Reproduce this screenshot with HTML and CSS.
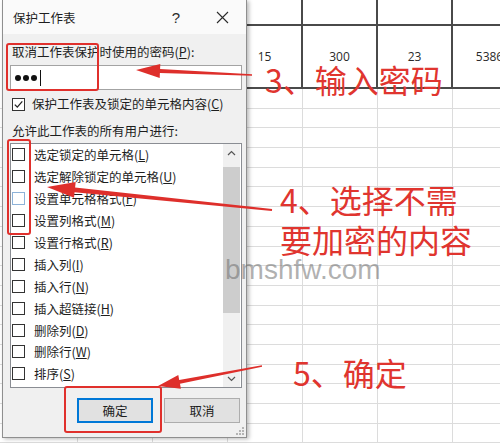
FILE: index.html
```html
<!DOCTYPE html>
<html lang="zh-CN">
<head>
<meta charset="utf-8">
<title>保护工作表</title>
<link rel="stylesheet" href="styles.css">
</head>
<body>
  <!-- worksheet behind the dialog -->
  <div class="sheet">
    <div class="row row-head">
      <div class="cell"></div><div class="cell"></div><div class="cell"></div><div class="cell"></div><div class="cell"></div><div class="cell"></div><div class="cell"></div>
    </div>
    <div class="row row-data">
      <div class="cell"></div><div class="cell"></div><div class="cell"></div><div class="cell">15</div><div class="cell">300</div><div class="cell">23</div><div class="cell">5386</div>
    </div>
    <div class="row-blank"></div><div class="row-blank"></div><div class="row-blank"></div>
    <div class="row-blank"></div><div class="row-blank"></div><div class="row-blank"></div>
    <div class="row-blank"></div><div class="row-blank"></div><div class="row-blank"></div>
    <div class="row-blank"></div><div class="row-blank"></div><div class="row-blank"></div>
    <div class="row-blank"></div><div class="row-blank"></div><div class="row-blank"></div>
    <div class="row-blank"></div><div class="row-blank"></div><div class="row-blank"></div>
  </div>

  <!-- protect sheet dialog -->
  <div class="dialog">
    <div class="titlebar">
      <span class="title">保护工作表</span>
      <span class="help">?</span>
      <span class="close">
        <svg width="13" height="13" viewBox="0 0 13 13"><path d="M1 1L12 12M12 1L1 12" stroke="#2b2b2b" stroke-width="1.1" fill="none"/></svg>
      </span>
    </div>
    <div class="dialog-body">
      <div class="field-label">取消工作表保护时使用的密码(<u>P</u>):</div>
      <div class="password"><i class="dot"></i><i class="dot"></i><i class="dot"></i><i class="caret"></i></div>
      <div class="check-row">
        <span class="box"><svg width="11" height="11" viewBox="0 0 11 11"><path d="M1.8 5.6L4.3 8.1L9.3 2.4" stroke="#222" stroke-width="1.3" fill="none"/></svg></span>
        保护工作表及锁定的单元格内容(<u>C</u>)
      </div>
      <div class="field-label allow">允许此工作表的所有用户进行:</div>
      <div class="listbox">
        <ul class="options">
          <li><span class="box"></span>选定锁定的单元格(<u>L</u>)</li>
          <li><span class="box"></span>选定解除锁定的单元格(<u>U</u>)</li>
          <li><span class="box hover"></span>设置单元格格式(<u>F</u>)</li>
          <li><span class="box"></span>设置列格式(<u>M</u>)</li>
          <li><span class="box"></span>设置行格式(<u>R</u>)</li>
          <li><span class="box"></span>插入列(<u>I</u>)</li>
          <li><span class="box"></span>插入行(<u>N</u>)</li>
          <li><span class="box"></span>插入超链接(<u>H</u>)</li>
          <li><span class="box"></span>删除列(<u>D</u>)</li>
          <li><span class="box"></span>删除行(<u>W</u>)</li>
          <li><span class="box"></span>排序(<u>S</u>)</li>
        </ul>
        <div class="scrollbar">
          <span class="arrow"><svg width="9" height="6" viewBox="0 0 9 6"><path d="M1 5L4.5 1.5L8 5" stroke="#555" stroke-width="1.2" fill="none"/></svg></span>
          <span class="thumb"></span>
          <span class="arrow arrow-down"><svg width="9" height="6" viewBox="0 0 9 6"><path d="M1 1L4.5 4.5L8 1" stroke="#555" stroke-width="1.2" fill="none"/></svg></span>
        </div>
      </div>
      <div class="buttons">
        <button class="btn primary">确定</button>
        <button class="btn">取消</button>
      </div>
    </div>
    <svg class="grip" width="8" height="8" viewBox="0 0 8 8">
      <rect x="6" y="0" width="2" height="2" fill="#b4b4b4"/>
      <rect x="3" y="3" width="2" height="2" fill="#b4b4b4"/>
      <rect x="6" y="3" width="2" height="2" fill="#b4b4b4"/>
      <rect x="0" y="6" width="2" height="2" fill="#b4b4b4"/>
      <rect x="3" y="6" width="2" height="2" fill="#b4b4b4"/>
      <rect x="6" y="6" width="2" height="2" fill="#b4b4b4"/>
    </svg>
  </div>

  <div class="watermark">bmshfw.com</div>

  <!-- red step annotations -->
  <div class="marks">
    <svg class="arrows" width="500" height="444" viewBox="0 0 500 444">
      <polygon points="252,74.2 160.1,69 160.3,64 136,70 159.7,78 159.9,73 252,75.8"/>
      <polygon points="272.1,209 75.1,187.4 75.7,181.9 47,187 74,197.8 74.6,192.3 271.9,211"/>
      <polygon points="261.9,365.3 179.2,379.9 178.3,375 158,386 180.9,388.7 180,383.8 262.1,366.7"/>
    </svg>
    <div class="frame frame-password"></div>
    <div class="frame frame-checks"></div>
    <div class="frame frame-ok"></div>
    <div class="note note-3">3、输入密码</div>
    <div class="note note-4">4、选择不需<br>要加密的内容</div>
    <div class="note note-5">5、确定</div>
  </div>
</body>
</html>
```

FILE: styles.css
```css
* {
  box-sizing: border-box;
}

body {
  margin: 0;
  width: 500px;
  height: 444px;
  overflow: hidden;
  position: relative;
  background: #fff;
  font-family: "Noto Sans CJK SC", sans-serif;
}

/* ---------- worksheet ---------- */
.sheet {
  display: flex;
  flex-direction: column;
}

.row {
  display: grid;
  grid-template-columns: repeat(7, 75px);
  padding-left: 3px;
}

.row-head {
  height: 26px;
}

.row-data {
  height: 63px;
}

.row .cell {
  border-right: 2px solid #4a4a4a;
  border-bottom: 2px solid #4a4a4a;
  display: flex;
  align-items: center;
  justify-content: center;
  font: 12px "Open Sans", sans-serif;
  color: #2a2a2a;
  white-space: nowrap;
  overflow: hidden;
}

.row-blank {
  flex: none;
  height: 19.7px;
  border-bottom: 1px solid #dcdcdc;
  background-image: repeating-linear-gradient(90deg, transparent 0 74px, #dcdcdc 74px 75px);
  background-position: 3px 0;
}

/* ---------- dialog ---------- */
.dialog {
  position: absolute;
  left: 2px;
  top: 0;
  width: 245px;
  height: 438px;
  background: #f0f0f0;
  border: 1px solid #8f8f8f;
  border-top: 0;
  box-shadow: 2px 1px 4px rgba(0, 0, 0, 0.28);
  display: flex;
  flex-direction: column;
  color: #1e1e1e;
}

.titlebar {
  height: 34px;
  flex: none;
  background: #fafafa;
  display: flex;
  align-items: center;
  padding: 0 10px 0 10px;
  font-size: 12.5px;
}

.title {
  flex: 1;
}

.help {
  width: 20px;
  margin-right: 22px;
  text-align: center;
  font: 15px "Liberation Sans", sans-serif;
  color: #2b2b2b;
}

.close {
  width: 28px;
  display: flex;
  justify-content: center;
}

.dialog-body {
  padding: 0 4px 0 7px;
  display: flex;
  flex-direction: column;
  font-size: 12.5px;
}

.field-label {
  line-height: 16px;
  margin: 10px 0 0 2px;
  white-space: nowrap;
}

.password {
  margin-top: 5px;
  height: 25px;
  background: #fff;
  border: 1px solid #a3a3a3;
  display: flex;
  align-items: center;
  gap: 2px;
  padding-left: 4px;
}

.dot {
  width: 6px;
  height: 6px;
  border-radius: 50%;
  background: #111;
}

.caret {
  width: 1px;
  height: 16px;
  background: #111;
  margin-left: 1px;
}

.check-row {
  margin-top: 6px;
  height: 16px;
  line-height: 16px;
  display: flex;
  align-items: center;
  padding-left: 2px;
  white-space: nowrap;
}

.box {
  flex: none;
  width: 13px;
  height: 13px;
  border: 1px solid #333;
  background: #fff;
  margin-right: 7px;
  display: flex;
}

.box.hover {
  border-color: #8db2d8;
}

.allow {
  margin-top: 11px;
}

.listbox {
  margin-top: 4px;
  height: 245px;
  background: #fff;
  border: 1px solid #8a8d93;
  display: flex;
}

.options {
  flex: 1;
  list-style: none;
  margin: 0;
  padding: 0 0 0 1px;
}

.options li {
  height: 21.9px;
  display: flex;
  align-items: center;
  white-space: nowrap;
}

.options .box {
  margin-right: 9px;
}

.scrollbar {
  width: 17px;
  margin-right: 1px;
  background: #f0f0f0;
  display: flex;
  flex-direction: column;
}

.arrow {
  height: 17px;
  display: flex;
  align-items: center;
  justify-content: center;
}

.thumb {
  margin-top: 6px;
  height: 146px;
  background: #cdcdcd;
}

.arrow-down {
  margin-top: auto;
}

.buttons {
  margin-top: 10px;
  display: flex;
  justify-content: flex-end;
  gap: 11px;
  padding-right: 2px;
}

.btn {
  width: 76px;
  height: 25px;
  padding: 0;
  background: #e1e1e1;
  border: 1px solid #adadad;
  font: 12.5px "Noto Sans CJK SC", sans-serif;
  color: #1e1e1e;
}

.btn.primary {
  border-color: #0078d7;
  box-shadow: inset 0 0 0 1px #0078d7;
}

.grip {
  position: absolute;
  right: 2px;
  bottom: 2px;
}

/* ---------- watermark and annotations ---------- */
.watermark {
  position: absolute;
  left: 225px;
  top: 256px;
  font: 28px/28px "Liberation Sans", sans-serif;
  color: rgba(110, 110, 110, 0.55);
  white-space: nowrap;
}

.marks {
  position: absolute;
  inset: 0;
  pointer-events: none;
}

.arrows {
  position: absolute;
  left: 0;
  top: 0;
}

.arrows polygon {
  fill: #de2f2b;
}

.frame {
  position: absolute;
  border: 2.5px solid #e0302c;
  border-radius: 3px;
}

.frame-password {
  left: 6px;
  top: 43px;
  width: 93px;
  height: 48px;
}

.frame-checks {
  left: 7px;
  top: 139px;
  width: 24px;
  height: 96px;
}

.frame-ok {
  left: 64px;
  top: 386px;
  width: 98px;
  height: 47px;
}

.note {
  position: absolute;
  color: #e0352f;
  font: 32px/40px "Noto Sans CJK SC", sans-serif;
  white-space: nowrap;
}

.note-3 {
  left: 265px;
  top: 59px;
}

.note-4 {
  left: 280px;
  top: 179px;
}

.note-5 {
  left: 293px;
  top: 352px;
}
```
